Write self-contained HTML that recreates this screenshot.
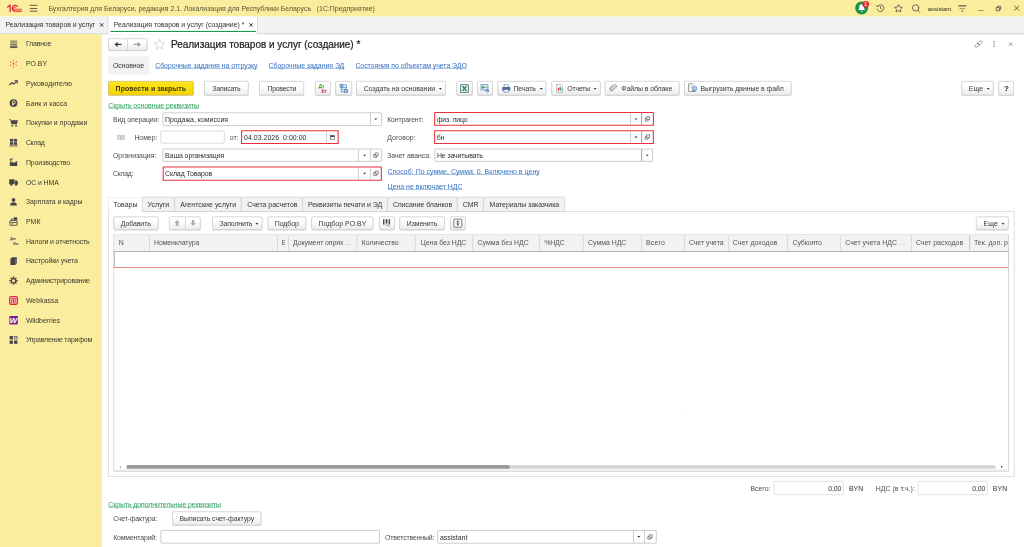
<!DOCTYPE html>
<html lang="ru">
<head>
<meta charset="utf-8">
<title>Реализация товаров и услуг (создание) *</title>
<style>
*{box-sizing:border-box;margin:0;padding:0}
html,body{width:1024px;height:547px;overflow:hidden;background:#fff}
body{font-family:"Liberation Sans",sans-serif;font-size:6.9333px;color:#3a3a3a;position:relative;line-height:8px}
#root{position:absolute;left:0;top:0;width:1920px;height:1026px;overflow:hidden;transform:scale(0.533333);transform-origin:0 0}
.a{position:absolute;white-space:nowrap}
svg.a{overflow:visible}
#txt{position:absolute;left:0;top:0;width:1024px;height:547px;overflow:hidden;will-change:transform}
.t{height:8px;line-height:8px}
.btn{border:1px solid #b4b4b4;border-radius:2.5px;background:linear-gradient(#ffffff 30%,#ececec);box-shadow:0 1px 0 rgba(0,0,0,.16)}
.btn.def{background:linear-gradient(#ffe61f,#f6d200);border-color:#b79a00}
.inp{border:1px solid #a0a0a0;background:#fff;border-radius:2px}
.inp.red{border:2px solid #ea2f38;border-radius:1px}
.lnk{color:#3670c4}
.glnk{color:#27a058}
.tab{border:1px solid #c4c4c4;border-bottom:0;background:#f2f2f2;border-radius:2px 2px 0 0}
</style>
</head>
<body><div id="root">
<div class="a" style="left:0px;top:0px;width:1920px;height:31px;background:#fbed9e"></div>
<div class="a" style="left:0px;top:31px;width:1920px;height:33px;background:#f2f2f2;border-bottom:1px solid #b8b8b8"></div>
<div class="a" style="left:0px;top:64px;width:190px;height:962px;background:#fbed9e"></div>
<div class="a" style="left:190px;top:64px;width:2px;height:962px;background:linear-gradient(90deg,#e4e1d2,#ffffff)"></div>
<svg class="a" style="left:12.38px;top:6.75px;" width="30" height="16.88" viewBox="0 0 32 18"><g fill="none" stroke="#e3262e" stroke-width="2.6" stroke-linecap="round" stroke-linejoin="round"><path d="M2.5 6.5 L7.5 2.5 V15.5"/><path d="M21.5 5.2 A5.6 5.6 0 1 0 17.5 14.6 H30"/><path d="M18.5 8.2 A2.4 2.4 0 1 0 17.6 11 H30" stroke-width="1.6"/></g></svg>
<div class="a" style="left:56px;top:9px;width:14px;height:2px;background:#6b6647"></div>
<div class="a" style="left:56px;top:15px;width:14px;height:2px;background:#6b6647"></div>
<div class="a" style="left:56px;top:20px;width:14px;height:2px;background:#6b6647"></div>
<svg class="a" style="left:1603.12px;top:1.69px;" width="26.25" height="26.25" viewBox="0 0 28 28"><circle cx="13.4" cy="13.8" r="13" fill="#1a9347"/><path d="M13.4 6.2c-2.9 0-4.6 2.2-4.6 5.2 0 3.6-1.3 5.2-2.6 6.6h14.4c-1.3-1.4-2.6-3-2.6-6.6 0-3-1.7-5.2-4.6-5.2z" fill="#fff"/><path d="M11.4 19.4a2 2 0 0 0 4 0z" fill="#fff"/><circle cx="21.6" cy="6.4" r="6.6" fill="#e3212b"/><text x="21.4" y="10" font-family="Liberation Sans, sans-serif" font-size="10" font-weight="bold" fill="#fff" text-anchor="middle">1</text></svg>
<svg class="a" style="left:1641.75px;top:7.12px;" width="16.88" height="16.88" viewBox="0 0 18 18"><g fill="none" stroke="#4d4a3a" stroke-width="1.5" stroke-linecap="round" stroke-linejoin="round"><path d="M3.4 5.2 A7 7 0 1 1 2.6 10.6"/><path d="M1 3.4 L3.2 5.8 L6.2 4.6"/><path d="M9.6 5.4 V9.6 L12.2 11.4"/></g></svg>
<svg class="a" style="left:1675.5px;top:6.75px;" width="17.25" height="17.25" viewBox="0 0 18 18"><path d="M9 1.6 L11.3 6.5 L16.6 7.1 L12.7 10.8 L13.7 16.1 L9 13.5 L4.3 16.1 L5.3 10.8 L1.4 7.1 L6.7 6.5 Z" fill="none" stroke="#4d4a3a" stroke-width="1.5" stroke-linejoin="round"/></svg>
<svg class="a" style="left:1709.25px;top:6.75px;" width="17.62" height="17.62" viewBox="0 0 18 18"><g fill="none" stroke="#4d4a3a" stroke-width="1.5" stroke-linecap="round"><circle cx="8" cy="8" r="6"/><path d="M12.4 12.6 L16 16.4"/></g></svg>
<div class="a" style="left:1797px;top:10px;width:15px;height:2px;background:#4a4736"></div>
<div class="a" style="left:1799px;top:16px;width:10px;height:1px;background:#4a4736"></div>
<div class="a" style="left:1803px;top:20px;width:3px;height:2px;background:#4a4736"></div>
<div class="a" style="left:1834px;top:19px;width:10px;height:1px;background:#4d4a3a"></div>
<svg class="a" style="left:1866.75px;top:10.5px;" width="10.12" height="10.12" viewBox="0 0 10 10"><g fill="none" stroke="#4d4a3a" stroke-width="1.4"><path d="M0.8 3.2 H6.8 V9.2 H0.8 Z"/><path d="M3.2 3 V0.8 H9.2 V6.8 H7"/></g></svg>
<svg class="a" style="left:1901.25px;top:9.75px;" width="10.5" height="10.5" viewBox="0 0 10 10"><path d="M0.8 0.8 L9.2 9.2 M9.2 0.8 L0.8 9.2" stroke="#4d4a3a" stroke-width="1.5" fill="none"/></svg>
<svg class="a" style="left:186.94px;top:42.56px;" width="7.31" height="7.31" viewBox="0 0 8 8"><path d="M0.6 0.6 L7.4 7.4 M7.4 0.6 L0.6 7.4" stroke="#2a2a2a" stroke-width="1.9" fill="none"/></svg>
<div class="a" style="left:202px;top:31px;width:281px;height:33px;background:#fff;border-left:1px solid #c0c0c0;border-right:1px solid #c0c0c0"></div>
<div class="a" style="left:207px;top:58px;width:273px;height:2px;background:#1a9a46"></div>
<svg class="a" style="left:467.25px;top:42.56px;" width="7.31" height="7.31" viewBox="0 0 8 8"><path d="M0.6 0.6 L7.4 7.4 M7.4 0.6 L0.6 7.4" stroke="#2a2a2a" stroke-width="1.9" fill="none"/></svg>
<svg class="a" style="left:16.69px;top:73.69px;" width="16.69" height="16.69" viewBox="0 0 16 16"><g fill="#47454b"><rect x="2" y="2.2" width="12.6" height="1.4"/><rect x="2" y="5.5" width="12.6" height="1.4"/><rect x="2" y="8.6" width="12.6" height="1.4"/><rect x="2" y="11.4" width="12.6" height="4" fill="#8a8468"/><rect x="2" y="11.4" width="12.6" height="1.1"/><rect x="2" y="14.3" width="12.6" height="1.1"/></g></svg>
<svg class="a" style="left:16.69px;top:110.69px;" width="16.69" height="16.69" viewBox="0 0 16 16"><g stroke="#e8343e" stroke-width="0.9" fill="#e8343e" opacity="0.85"><path d="M8 8 L8 2 M8 8 L8 14 M8 8 L2.8 5 M8 8 L13.2 5 M8 8 L2.8 11 M8 8 L13.2 11" opacity="0.5"/><g stroke="none"><circle cx="8" cy="1.8" r="1"/><circle cx="8" cy="14.2" r="1"/><circle cx="2.6" cy="4.9" r="1"/><circle cx="13.4" cy="4.9" r="1"/><circle cx="2.6" cy="11.1" r="1"/><circle cx="13.4" cy="11.1" r="1"/><circle cx="8" cy="8" r="1.1"/></g></g></svg>
<svg class="a" style="left:16.69px;top:147.69px;" width="16.69" height="16.69" viewBox="0 0 16 16"><g fill="none" stroke="#47454b" stroke-width="2" stroke-linejoin="round" stroke-linecap="round"><path d="M1 10.6 L5.4 6.4 L8.4 9.2 L14 3.8"/><path d="M10.4 3.2 H14.6 V7.4"/></g></svg>
<svg class="a" style="left:16.69px;top:184.69px;" width="16.69" height="16.69" viewBox="0 0 16 16"><circle cx="8" cy="8" r="7" fill="#47454b"/><path d="M6.4 12.2 V4.2 H9 A2.4 2.4 0 0 1 9 9 H5.2 M5.2 10.8 H9" fill="none" stroke="#fbed9e" stroke-width="1.4"/></svg>
<svg class="a" style="left:16.69px;top:221.69px;" width="16.69" height="16.69" viewBox="0 0 16 16"><g fill="#47454b"><path d="M0.2 1.4 H3 L3.8 3.4 H16 L14 10.6 H4.4 L2.2 2.8 H0.2 Z"/><circle cx="5.6" cy="13.4" r="1.7"/><circle cx="12.6" cy="13.4" r="1.7"/></g></svg>
<svg class="a" style="left:16.69px;top:258.68px;" width="16.69" height="16.69" viewBox="0 0 16 16"><g fill="#47454b"><rect x="1.6" y="1.4" width="5.8" height="4.8"/><rect x="8.6" y="1.4" width="5.8" height="4.8"/><rect x="1.6" y="7.2" width="5.8" height="4.8"/><rect x="8.6" y="7.2" width="5.8" height="4.8"/><rect x="0.8" y="13.2" width="14.4" height="1.6"/></g></svg>
<svg class="a" style="left:16.69px;top:295.68px;" width="16.69" height="16.69" viewBox="0 0 16 16"><g fill="#47454b"><path d="M1.4 14.8 V6 L5 9 V6 L9 9.4 L13 6 L14.6 6 V14.8 Z"/><rect x="1.4" y="1.4" width="3.4" height="3.6"/><rect x="5.6" y="1" width="2" height="1.6"/></g></svg>
<svg class="a" style="left:16.69px;top:332.68px;" width="16.69" height="16.69" viewBox="0 0 16 16"><g fill="#47454b"><path d="M0.2 3 H10 V11.8 H0.2 Z"/><path d="M10.8 5 H14 L16 8 V11.8 H10.8 Z"/><circle cx="4" cy="12.6" r="2.1"/><circle cx="12.6" cy="12.6" r="2.1"/></g></svg>
<svg class="a" style="left:16.69px;top:369.68px;" width="16.69" height="16.69" viewBox="0 0 16 16"><g fill="#47454b"><circle cx="8" cy="4.6" r="3.3"/><path d="M1.8 14.8 C1.8 10.6 4.6 9 8 9 C11.4 9 14.2 10.6 14.2 14.8 Z"/></g></svg>
<svg class="a" style="left:16.69px;top:406.68px;" width="16.69" height="16.69" viewBox="0 0 16 16"><g fill="none" stroke="#47454b" stroke-width="1.5"><rect x="1.6" y="6.2" width="12.8" height="8.6" rx="0.6"/><path d="M4.4 6 V3.4 H9.2"/><rect x="9.4" y="1.2" width="4.4" height="3.4" fill="#47454b"/><path d="M1.6 9.6 H14.4"/><path d="M4 12.2 H8" stroke-width="1.2"/></g></svg>
<svg class="a" style="left:16.69px;top:443.68px;" width="16.69" height="16.69" viewBox="0 0 16 16"><text x="1.6" y="6.6" font-family="Liberation Sans, sans-serif" font-size="6.4" font-weight="bold" font-style="italic" fill="#47454b">Дт</text><text x="7.4" y="14.2" font-family="Liberation Sans, sans-serif" font-size="6.4" font-weight="bold" font-style="italic" fill="#47454b">Кт</text></svg>
<svg class="a" style="left:16.69px;top:480.68px;" width="16.69" height="16.69" viewBox="0 0 16 16"><g><path d="M2.4 4.2 L5.8 1.2 H14.2 V11.8 L10.8 15 H2.4 Z" fill="#47454b"/><path d="M11 4.4 L14 1.6 V11.6 L11 14.4 Z" fill="#77747a"/></g></svg>
<svg class="a" style="left:16.69px;top:517.68px;" width="16.69" height="16.69" viewBox="0 0 16 16"><g fill="none" stroke="#47454b"><circle cx="8" cy="8" r="3.9" stroke-width="2.4"/><g stroke-width="2.6"><path d="M8 0.6 V3.4 M8 12.6 V15.4 M0.6 8 H3.4 M12.6 8 H15.4 M2.8 2.8 L4.6 4.6 M11.4 11.4 L13.2 13.2 M2.8 13.2 L4.6 11.4 M11.4 4.6 L13.2 2.8"/></g></g></svg>
<svg class="a" style="left:16.69px;top:554.68px;" width="16.69" height="16.69" viewBox="0 0 16 16"><rect x="1.2" y="1.2" width="13.6" height="13.6" rx="2.4" fill="#fbe4e4" stroke="#e3262e" stroke-width="2.4"/><g fill="none" stroke="#e3262e" stroke-width="1.8"><path d="M3.4 4.8 H12.6 M5 6.2 V12.8 M8 6.2 V12.8 M11 6.2 V12.8"/></g></svg>
<svg class="a" style="left:16.69px;top:591.68px;" width="16.69" height="16.69" viewBox="0 0 16 16"><defs><linearGradient id="wbg" x1="0" y1="0" x2="1" y2="0"><stop offset="0" stop-color="#a01b93"/><stop offset="1" stop-color="#5a1d8e"/></linearGradient></defs><rect x="0.4" y="0.4" width="15.2" height="15.2" rx="1" fill="url(#wbg)"/><text x="7.8" y="13.4" font-family="Liberation Sans, sans-serif" font-size="14.5" font-weight="bold" font-style="italic" fill="#fff" text-anchor="middle">W</text></svg>
<svg class="a" style="left:16.69px;top:628.68px;" width="16.69" height="16.69" viewBox="0 0 16 16"><g fill="#47454b"><rect x="1" y="1" width="6" height="6"/><rect x="1" y="9" width="6" height="6"/><rect x="9" y="9" width="6" height="6"/><rect x="9.7" y="1.7" width="4.6" height="4.6" fill="none" stroke="#47454b" stroke-width="1.3"/></g></svg>
<div class="a btn" style="left:203px;top:72px;width:73px;height:23px;"></div>
<div class="a" style="left:239px;top:73px;width:1px;height:20px;background:#c0c0c0"></div>
<svg class="a" style="left:214.12px;top:78px;" width="14.62" height="10.5" viewBox="0 0 16 12"><path d="M0.4 6 L7 0.4 V4.6 H15.6 V7.4 H7 V11.6 Z" fill="#3a3a3a"/></svg>
<svg class="a" style="left:249.75px;top:78px;" width="14.62" height="10.5" viewBox="0 0 16 12"><path d="M15.6 6 L9 0.4 V4.8 H0.4 V7.2 H9 V11.6 Z" fill="#9c9c9c"/></svg>
<svg class="a" style="left:287.62px;top:71.81px;" width="22.5" height="21.38" viewBox="0 0 24 23"><path d="M12 1.6 L15.1 8.4 L22.4 9.2 L17 14.2 L18.5 21.4 L12 17.8 L5.5 21.4 L7 14.2 L1.6 9.2 L8.9 8.4 Z" fill="#fff" stroke="#c4c4c4" stroke-width="1.3" stroke-linejoin="round"/></svg>
<svg class="a" style="left:1826.25px;top:74.62px;" width="17.25" height="15.37" viewBox="0 0 18 16"><g fill="none" stroke="#777" stroke-width="1.15" transform="rotate(-40 9 8)"><rect x="0.6" y="5.4" width="9.6" height="5.2" rx="2.6"/><rect x="7.8" y="5.4" width="9.6" height="5.2" rx="2.6"/></g></svg>
<div class="a" style="left:1863px;top:77px;width:2px;height:3px;background:#666"></div>
<div class="a" style="left:1863px;top:82px;width:2px;height:2px;background:#666"></div>
<div class="a" style="left:1863px;top:86px;width:2px;height:2px;background:#666"></div>
<svg class="a" style="left:1890.56px;top:78.75px;" width="8.06" height="7.88" viewBox="0 0 8 8"><path d="M0.8 0.8 L7.2 7.2 M7.2 0.8 L0.8 7.2" stroke="#6a6a6a" stroke-width="1.3" fill="none"/></svg>
<div class="a" style="left:202px;top:106px;width:78px;height:34px;background:#f2f2f2;border-radius:3px"></div>
<div class="a" style="left:291px;top:128px;width:192px;height:1px;background:#5f8fd6"></div>
<div class="a" style="left:504px;top:128px;width:142px;height:1px;background:#5f8fd6"></div>
<div class="a" style="left:667px;top:128px;width:208px;height:1px;background:#5f8fd6"></div>
<div class="a btn def" style="left:203px;top:152px;width:160px;height:27px;"></div>
<div class="a btn " style="left:383px;top:152px;width:83px;height:27px;"></div>
<div class="a btn " style="left:486px;top:152px;width:84px;height:27px;"></div>
<div class="a btn " style="left:591px;top:152px;width:29px;height:27px;"></div>
<svg class="a" style="left:596.62px;top:157.12px;" width="17.62" height="17.62" viewBox="0 0 18 18"><text x="0" y="8.4" font-family="Liberation Sans, sans-serif" font-size="9.4" font-weight="bold" fill="#1f9d4d">Дт</text><text x="6" y="17" font-family="Liberation Sans, sans-serif" font-size="9.4" font-weight="bold" fill="#e3262e">Кт</text></svg>
<div class="a btn " style="left:629px;top:152px;width:31px;height:27px;"></div>
<svg class="a" style="left:636.38px;top:157.12px;" width="16.88" height="17.62" viewBox="0 0 18 19"><g fill="none" stroke="#3f73b5" stroke-width="1.4"><rect x="1.6" y="1.4" width="6" height="5.6" fill="#9fc0e6"/><rect x="10.6" y="11.6" width="6" height="5.6" fill="#9fc0e6"/><path d="M9 2.4 H14.6 V9.4 M9.4 16.4 H4 V9.4"/><rect x="5" y="7.6" width="8.4" height="4" fill="#dbe7f5" stroke-width="1"/></g></svg>
<div class="a btn " style="left:668px;top:152px;width:168px;height:27px;"></div>
<svg class="a" style="left:823.31px;top:164.91px;" width="5.62" height="3.19" viewBox="0 0 6 3.4"><path d="M0 0 H6 L3 3.4 Z" fill="#3a3a3a"/></svg>
<div class="a btn " style="left:856px;top:152px;width:30px;height:27px;"></div>
<svg class="a" style="left:862.88px;top:157.88px;" width="15.75" height="16.12" viewBox="0 0 17 17"><rect x="0.8" y="0.8" width="15.4" height="15.4" fill="#e9f1ea" stroke="#2b5a86" stroke-width="1.5"/><path d="M4.6 3.8 L12.4 13.2 M12.4 3.8 L4.6 13.2" stroke="#1f7a3e" stroke-width="2.4" fill="none"/><path d="M1 15.6 H16" stroke="#8fc04a" stroke-width="1"/></svg>
<div class="a btn " style="left:895px;top:152px;width:29px;height:27px;"></div>
<svg class="a" style="left:900.75px;top:158.25px;" width="17.62" height="15.75" viewBox="0 0 19 17"><rect x="1" y="1" width="14" height="10.4" fill="#e3ecf7" stroke="#4a7dbb" stroke-width="1.4"/><circle cx="5" cy="6.2" r="2.4" fill="#2a9a4a"/><path d="M8 6.2 H13" stroke="#2a9a4a" stroke-width="1.4"/><path d="M9 13.4 H16.4 M13.6 10.4 L16.8 13.4 L13.6 16.4" fill="none" stroke="#2d66b8" stroke-width="1.8"/></svg>
<div class="a btn " style="left:933px;top:152px;width:91px;height:27px;"></div>
<svg class="a" style="left:940.5px;top:157.5px;" width="16.5" height="16.12" viewBox="0 0 18 17"><rect x="4.4" y="1" width="9.2" height="5" fill="#fff" stroke="#56739c" stroke-width="1.2"/><rect x="0.8" y="5.4" width="16.4" height="7.6" rx="1.4" fill="#4b6a96"/><rect x="4.4" y="10.4" width="9.2" height="5.4" fill="#fff" stroke="#56739c" stroke-width="1.2"/></svg>
<svg class="a" style="left:1012.13px;top:164.91px;" width="5.62" height="3.19" viewBox="0 0 6 3.4"><path d="M0 0 H6 L3 3.4 Z" fill="#3a3a3a"/></svg>
<div class="a btn " style="left:1034px;top:152px;width:92px;height:27px;"></div>
<svg class="a" style="left:1042.5px;top:156.75px;" width="12.75" height="17.25" viewBox="0 0 14 18"><path d="M1 1 H9.4 L13 4.6 V17 H1 Z" fill="#fff" stroke="#8a8a8a" stroke-width="1.2"/><rect x="3.4" y="8" width="2.6" height="5.6" fill="#e3262e"/><rect x="6.8" y="5.6" width="2.6" height="8" fill="#2a9a4a"/><path d="M10 9 H11.6 V13.6 H10 Z" fill="#d9a400"/></svg>
<svg class="a" style="left:1113.19px;top:164.91px;" width="5.62" height="3.19" viewBox="0 0 6 3.4"><path d="M0 0 H6 L3 3.4 Z" fill="#3a3a3a"/></svg>
<div class="a btn " style="left:1134px;top:152px;width:140px;height:27px;"></div>
<svg class="a" style="left:1143px;top:158.25px;" width="13.5" height="14.62" viewBox="0 0 14 15"><path d="M11.6 3.4 L5 10 A1.7 1.7 0 0 1 2.6 7.6 L8.8 1.6 A2.8 2.8 0 0 1 12.8 5.6 L6.2 12.2 A4 4 0 0 1 0.8 6.6 L5.6 1.8" fill="none" stroke="#5c5c5c" stroke-width="1.2" stroke-linecap="round"/></svg>
<div class="a btn " style="left:1283px;top:152px;width:201px;height:27px;"></div>
<svg class="a" style="left:1290.38px;top:156.38px;" width="16.5" height="18.38" viewBox="0 0 18 20"><path d="M1 1 H9 L12.6 4.6 V17 H1 Z" fill="#fff" stroke="#666" stroke-width="1.3"/><path d="M3.2 5 H8 M3.2 8 H6" stroke="#888" stroke-width="1"/><rect x="8.4" y="7.6" width="8.6" height="7.4" fill="#dce8f6" stroke="#3f73b5" stroke-width="1.2"/><path d="M10 10 H15.4 M10 12.6 H15.4" stroke="#3f73b5" stroke-width="1"/><path d="M9.6 16.4 A3.8 2.6 0 0 0 16.4 16.4 Z" fill="#3f73b5"/></svg>
<div class="a btn " style="left:1803px;top:152px;width:60px;height:27px;"></div>
<svg class="a" style="left:1850.06px;top:164.91px;" width="5.62" height="3.19" viewBox="0 0 6 3.4"><path d="M0 0 H6 L3 3.4 Z" fill="#3a3a3a"/></svg>
<div class="a btn " style="left:1872px;top:152px;width:29px;height:27px;"></div>
<div class="a" style="left:203px;top:203px;width:170px;height:1px;background:#56b57e"></div>
<div class="a inp" style="left:305px;top:211px;width:411px;height:25px;"></div>
<div class="a" style="left:694px;top:212px;width:1px;height:22px;background:#a8a8a8"></div>
<svg class="a" style="left:702.47px;top:222.09px;" width="5.44" height="3.19" viewBox="0 0 6 3.4"><path d="M0 0 H6 L3 3.4 Z" fill="#2e2e2e"/></svg>
<div class="a inp red" style="left:814px;top:210px;width:412px;height:26px;"></div>
<div class="a" style="left:1182px;top:212px;width:1px;height:23px;background:#a8a8a8"></div>
<div class="a" style="left:1202px;top:212px;width:2px;height:23px;background:#a8a8a8"></div>
<svg class="a" style="left:1189.78px;top:222.09px;" width="5.44" height="3.19" viewBox="0 0 6 3.4"><path d="M0 0 H6 L3 3.4 Z" fill="#2e2e2e"/></svg>
<svg class="a" style="left:1209px;top:218.44px;" width="9.75" height="9.75" viewBox="0 0 10 10"><g fill="none" stroke="#4a4a4a" stroke-width="1.25"><path d="M3.6 0.8 H9.2 V6.2 H3.6 Z"/><path d="M3.6 3.6 H0.8 V9.2 H6.4 V6.4"/></g></svg>
<svg class="a" style="left:219.75px;top:252.75px;" width="14.25" height="9.38" viewBox="0 0 15 10"><rect x="0.6" y="0.6" width="13.8" height="8.8" fill="#efefef" stroke="#b0b0b0" stroke-width="1.1"/><rect x="4.6" y="2.2" width="6" height="5.6" fill="#c4c4c4"/><path d="M2.6 2.4 V7.6 M12.6 2.4 V7.6" stroke="#c4c4c4" stroke-width="0.9"/></svg>
<div class="a inp" style="left:301px;top:245px;width:120px;height:24px;border-color:#bdbdbd;"></div>
<div class="a inp red" style="left:452px;top:244px;width:183px;height:26px;"></div>
<div class="a" style="left:612px;top:246px;width:1px;height:23px;background:#a8a8a8"></div>
<svg class="a" style="left:618.56px;top:253.12px;" width="8.62" height="8.62" viewBox="0 0 11 11"><rect x="0.8" y="1.6" width="9.4" height="8.6" fill="#fff" stroke="#444" stroke-width="1.4"/><rect x="0.8" y="1.6" width="9.4" height="3.4" fill="#444"/></svg>
<div class="a inp red" style="left:814px;top:244px;width:412px;height:26px;"></div>
<div class="a" style="left:1182px;top:246px;width:1px;height:23px;background:#a8a8a8"></div>
<div class="a" style="left:1202px;top:246px;width:2px;height:23px;background:#a8a8a8"></div>
<svg class="a" style="left:1189.78px;top:256.03px;" width="5.44" height="3.19" viewBox="0 0 6 3.4"><path d="M0 0 H6 L3 3.4 Z" fill="#2e2e2e"/></svg>
<svg class="a" style="left:1209px;top:252.38px;" width="9.75" height="9.75" viewBox="0 0 10 10"><g fill="none" stroke="#4a4a4a" stroke-width="1.25"><path d="M3.6 0.8 H9.2 V6.2 H3.6 Z"/><path d="M3.6 3.6 H0.8 V9.2 H6.4 V6.4"/></g></svg>
<div class="a inp" style="left:305px;top:279px;width:411px;height:24px;"></div>
<div class="a" style="left:672px;top:280px;width:1px;height:22px;background:#a8a8a8"></div>
<div class="a" style="left:694px;top:280px;width:1px;height:22px;background:#a8a8a8"></div>
<svg class="a" style="left:680.91px;top:289.78px;" width="5.44" height="3.19" viewBox="0 0 6 3.4"><path d="M0 0 H6 L3 3.4 Z" fill="#2e2e2e"/></svg>
<svg class="a" style="left:700.12px;top:286.13px;" width="9.75" height="9.75" viewBox="0 0 10 10"><g fill="none" stroke="#4a4a4a" stroke-width="1.25"><path d="M3.6 0.8 H9.2 V6.2 H3.6 Z"/><path d="M3.6 3.6 H0.8 V9.2 H6.4 V6.4"/></g></svg>
<div class="a inp" style="left:815px;top:279px;width:409px;height:24px;"></div>
<div class="a" style="left:1202px;top:280px;width:2px;height:22px;background:#a8a8a8"></div>
<svg class="a" style="left:1210.78px;top:289.78px;" width="5.44" height="3.19" viewBox="0 0 6 3.4"><path d="M0 0 H6 L3 3.4 Z" fill="#2e2e2e"/></svg>
<div class="a inp red" style="left:305px;top:312px;width:411px;height:27px;"></div>
<div class="a" style="left:672px;top:314px;width:1px;height:23px;background:#a8a8a8"></div>
<div class="a" style="left:694px;top:314px;width:1px;height:23px;background:#a8a8a8"></div>
<svg class="a" style="left:680.91px;top:324.09px;" width="5.44" height="3.19" viewBox="0 0 6 3.4"><path d="M0 0 H6 L3 3.4 Z" fill="#2e2e2e"/></svg>
<svg class="a" style="left:700.12px;top:320.44px;" width="9.75" height="9.75" viewBox="0 0 10 10"><g fill="none" stroke="#4a4a4a" stroke-width="1.25"><path d="M3.6 0.8 H9.2 V6.2 H3.6 Z"/><path d="M3.6 3.6 H0.8 V9.2 H6.4 V6.4"/></g></svg>
<div class="a" style="left:727px;top:327px;width:285px;height:1px;background:#5f8fd6"></div>
<div class="a" style="left:727px;top:355px;width:140px;height:1px;background:#5f8fd6"></div>
<div class="a" style="left:203px;top:396px;width:1699px;height:498px;border:1px solid #c4c4c4;background:#fff"></div>
<div class="a tab" style="left:203px;top:369px;width:64px;height:29px;background:#fff;"></div>
<div class="a tab" style="left:266px;top:369px;width:62px;height:28px;border-bottom:1px solid #c4c4c4;"></div>
<div class="a tab" style="left:327px;top:369px;width:126px;height:28px;border-bottom:1px solid #c4c4c4;"></div>
<div class="a tab" style="left:452px;top:369px;width:116px;height:28px;border-bottom:1px solid #c4c4c4;"></div>
<div class="a tab" style="left:567px;top:369px;width:160px;height:28px;border-bottom:1px solid #c4c4c4;"></div>
<div class="a tab" style="left:726px;top:369px;width:132px;height:28px;border-bottom:1px solid #c4c4c4;"></div>
<div class="a tab" style="left:857px;top:369px;width:50px;height:28px;border-bottom:1px solid #c4c4c4;"></div>
<div class="a tab" style="left:906px;top:369px;width:153px;height:28px;border-bottom:1px solid #c4c4c4;"></div>
<div class="a btn " style="left:213px;top:406px;width:84px;height:25px;"></div>
<div class="a btn " style="left:317px;top:406px;width:59px;height:25px;"></div>
<div class="a" style="left:347px;top:407px;width:1px;height:22px;background:#c0c0c0"></div>
<svg class="a" style="left:326.25px;top:411.75px;" width="12" height="12.38" viewBox="0 0 12 13"><path d="M6 0.6 L11.6 6.4 H8.4 V12.4 H3.6 V6.4 H0.4 Z" fill="#b0b0b0"/></svg>
<svg class="a" style="left:355.5px;top:412.12px;" width="12" height="12.38" viewBox="0 0 12 13"><path d="M6 12.4 L11.6 6.6 H8.4 V0.6 H3.6 V6.6 H0.4 Z" fill="#b0b0b0"/></svg>
<div class="a btn " style="left:398px;top:406px;width:94px;height:25px;"></div>
<svg class="a" style="left:479.44px;top:417.66px;" width="5.62" height="3.19" viewBox="0 0 6 3.4"><path d="M0 0 H6 L3 3.4 Z" fill="#3a3a3a"/></svg>
<div class="a btn " style="left:502px;top:406px;width:72px;height:25px;"></div>
<div class="a btn " style="left:584px;top:406px;width:116px;height:25px;"></div>
<div class="a btn " style="left:711px;top:406px;width:29px;height:25px;"></div>
<svg class="a" style="left:717px;top:409.88px;" width="16.12" height="16.5" viewBox="0 0 17 18"><g fill="#4a4a4a"><rect x="1" y="1" width="2.2" height="11"/><rect x="4.4" y="1" width="1.2" height="11"/><rect x="6.8" y="1" width="2.6" height="8"/><rect x="10.6" y="1" width="1.2" height="8"/><rect x="13" y="1" width="2.4" height="11"/></g><circle cx="9.6" cy="11.6" r="2.8" fill="#fff" stroke="#3f73b5" stroke-width="1.2"/><path d="M11.8 13.8 L15 17" stroke="#c98a1a" stroke-width="1.8"/></svg>
<div class="a btn " style="left:749px;top:406px;width:85px;height:25px;"></div>
<div class="a btn " style="left:844px;top:406px;width:29px;height:25px;"></div>
<svg class="a" style="left:850.12px;top:409.88px;" width="16.88" height="16.88" viewBox="0 0 18 18"><rect x="1" y="1" width="16" height="16" rx="1.6" fill="#fff" stroke="#444" stroke-width="1.4"/><path d="M9 3.4 L11.4 6.6 H6.6 Z M9 14.6 L11.4 11.4 H6.6 Z" fill="#444"/><path d="M9 6 V12" stroke="#444" stroke-width="1.2"/><path d="M5 9 H13" stroke="#444" stroke-width="1"/></svg>
<div class="a btn " style="left:1830px;top:406px;width:61px;height:25px;"></div>
<svg class="a" style="left:1877.81px;top:417.66px;" width="5.62" height="3.19" viewBox="0 0 6 3.4"><path d="M0 0 H6 L3 3.4 Z" fill="#3a3a3a"/></svg>
<div class="a" style="left:213px;top:440px;width:1678px;height:444px;border:1px solid #b4b4b4;background:#fff"></div>
<div class="a" style="left:214px;top:441px;width:1676px;height:29px;background:#f2f2f2"></div>
<div class="a" style="left:213px;top:471px;width:1678px;height:1px;background:#707070"></div>
<div class="a" style="left:280px;top:441px;width:1px;height:29px;background:#c6c6c6"></div>
<div class="a" style="left:520px;top:441px;width:1px;height:29px;background:#c6c6c6"></div>
<div class="a" style="left:540px;top:441px;width:1px;height:29px;background:#c6c6c6"></div>
<div class="a" style="left:669px;top:441px;width:1px;height:29px;background:#c6c6c6"></div>
<div class="a" style="left:778px;top:441px;width:1px;height:29px;background:#c6c6c6"></div>
<div class="a" style="left:886px;top:441px;width:1px;height:29px;background:#c6c6c6"></div>
<div class="a" style="left:1011px;top:441px;width:1px;height:29px;background:#c6c6c6"></div>
<div class="a" style="left:1093px;top:441px;width:1px;height:29px;background:#c6c6c6"></div>
<div class="a" style="left:1202px;top:441px;width:1px;height:29px;background:#c6c6c6"></div>
<div class="a" style="left:1283px;top:441px;width:1px;height:29px;background:#c6c6c6"></div>
<div class="a" style="left:1365px;top:441px;width:1px;height:29px;background:#c6c6c6"></div>
<div class="a" style="left:1476px;top:441px;width:1px;height:29px;background:#c6c6c6"></div>
<div class="a" style="left:1575px;top:441px;width:1px;height:29px;background:#c6c6c6"></div>
<div class="a" style="left:1709px;top:441px;width:1px;height:29px;background:#c6c6c6"></div>
<div class="a" style="left:1817px;top:441px;width:2px;height:29px;background:#c6c6c6"></div>
<div class="a" style="left:214px;top:472px;width:1677px;height:30px;border:1px solid #8c8c8c;border-top:0;border-right-color:#c4c4c4;border-bottom:1px solid #cf2029;"></div>
<div class="a" style="left:237px;top:872px;width:1630px;height:7px;background:#d6d6d6;border-radius:4px"></div>
<div class="a" style="left:237px;top:872px;width:719px;height:7px;background:#9b9b9b;border-radius:4px"></div>
<div class="a" style="left:215px;top:880px;width:1674px;height:3px;background:#ececec"></div>
<svg class="a" style="left:224.44px;top:873.56px;" width="2.81" height="3.94" viewBox="0 0 4 6"><path d="M4 0 L0 3 L4 6 Z" fill="#8a8a8a"/></svg>
<svg class="a" style="left:1876.88px;top:873.38px;" width="3.38" height="4.5" viewBox="0 0 4 6"><path d="M0 0 L4 3 L0 6 Z" fill="#333"/></svg>
<div class="a inp" style="left:1451px;top:902px;width:131px;height:26px;border-color:#c9c9c9;"></div>
<div class="a inp" style="left:1721px;top:902px;width:131px;height:26px;border-color:#c9c9c9;"></div>
<div class="a" style="left:203px;top:951px;width:211px;height:1px;background:#56b57e"></div>
<div class="a btn " style="left:323px;top:959px;width:167px;height:26px;"></div>
<div class="a inp" style="left:301px;top:994px;width:411px;height:25px;"></div>
<div class="a inp" style="left:820px;top:994px;width:411px;height:25px;"></div>
<div class="a" style="left:1187px;top:995px;width:1px;height:23px;background:#a8a8a8"></div>
<div class="a" style="left:1208px;top:995px;width:1px;height:23px;background:#a8a8a8"></div>
<svg class="a" style="left:1195.03px;top:1005.47px;" width="5.44" height="3.19" viewBox="0 0 6 3.4"><path d="M0 0 H6 L3 3.4 Z" fill="#2e2e2e"/></svg>
<svg class="a" style="left:1214.44px;top:1001.81px;" width="9.75" height="9.75" viewBox="0 0 10 10"><g fill="none" stroke="#4a4a4a" stroke-width="1.25"><path d="M3.6 0.8 H9.2 V6.2 H3.6 Z"/><path d="M3.6 3.6 H0.8 V9.2 H6.4 V6.4"/></g></svg>
<div class="a" style="left:1281px;top:769.12px;width:1.12px;height:1.12px;background:#bdbdbd"></div>
</div>
<div id="txt">
<div class="a t" style="left:48.4px;top:5px;color:#5a5535;">Бухгалтерия для Беларуси, редакция 2.1. Локализация для Республики Беларусь &nbsp; (1С:Предприятие)</div>
<div class="a t" style="left:927.8px;top:5px;font-size:5.9px;letter-spacing:0.027px;color:#2e2c20;">assistant</div>
<div class="a t" style="left:5.5px;top:21px;letter-spacing:-0.048px;color:#333;">Реализация товаров и услуг</div>
<div class="a t" style="left:113.8px;top:21px;letter-spacing:-0.031px;color:#333;">Реализация товаров и услуг (создание) *</div>
<div class="a t" style="left:25.9px;top:40px;letter-spacing:-0.170px;color:#3d3b32;">Главное</div>
<div class="a t" style="left:25.9px;top:60px;color:#3d3b32;">PO.BY</div>
<div class="a t" style="left:25.9px;top:80px;letter-spacing:-0.013px;color:#3d3b32;">Руководителю</div>
<div class="a t" style="left:25.9px;top:100px;letter-spacing:0.048px;color:#3d3b32;">Банк и касса</div>
<div class="a t" style="left:25.9px;top:119px;color:#3d3b32;">Покупки и продажи</div>
<div class="a t" style="left:25.9px;top:139px;letter-spacing:-0.273px;color:#3d3b32;">Склад</div>
<div class="a t" style="left:25.9px;top:159px;letter-spacing:-0.076px;color:#3d3b32;">Производство</div>
<div class="a t" style="left:25.9px;top:179px;letter-spacing:-0.079px;color:#3d3b32;">ОС и НМА</div>
<div class="a t" style="left:25.9px;top:198px;letter-spacing:-0.082px;color:#3d3b32;">Зарплата и кадры</div>
<div class="a t" style="left:25.9px;top:218px;letter-spacing:0.111px;color:#3d3b32;">РМК</div>
<div class="a t" style="left:25.9px;top:238px;letter-spacing:-0.132px;color:#3d3b32;">Налоги и отчетность</div>
<div class="a t" style="left:25.9px;top:257px;letter-spacing:-0.106px;color:#3d3b32;">Настройки учета</div>
<div class="a t" style="left:25.9px;top:277px;letter-spacing:-0.125px;color:#3d3b32;">Администрирование</div>
<div class="a t" style="left:25.9px;top:297px;letter-spacing:0.044px;color:#3d3b32;">Webkassa</div>
<div class="a t" style="left:25.9px;top:317px;letter-spacing:-0.061px;color:#3d3b32;">Wildberries</div>
<div class="a t" style="left:25.9px;top:336px;letter-spacing:-0.177px;color:#3d3b32;">Управление тарифом</div>
<div class="a t" style="left:171px;top:39px;font-size:10px;letter-spacing:-0.025px;color:#1e1e1e;height:12px;line-height:12px;-webkit-text-stroke:0.22px #1e1e1e;">Реализация товаров и услуг (создание) *</div>
<div class="a t" style="left:113px;top:62px;letter-spacing:-0.072px;color:#333;">Основное</div>
<div class="a t lnk" style="left:155.2px;top:62px;letter-spacing:-0.019px;">Сборочные задания на отгрузку</div>
<div class="a t lnk" style="left:268.6px;top:62px;letter-spacing:-0.029px;">Сборочные задания ЭД</div>
<div class="a t lnk" style="left:355.4px;top:62px;letter-spacing:-0.043px;">Состояния по объектам учета ЭДО</div>
<div class="a t" style="left:115.6px;top:85px;letter-spacing:0.060px;color:#40380a;font-weight:bold;">Провести и закрыть</div>
<div class="a t" style="left:212.3px;top:85px;letter-spacing:-0.167px;color:#3a3a3a;">Записать</div>
<div class="a t" style="left:267.4px;top:85px;letter-spacing:-0.234px;color:#3a3a3a;">Провести</div>
<div class="a t" style="left:363.8px;top:85px;letter-spacing:-0.027px;color:#3a3a3a;">Создать на основании</div>
<div class="a t" style="left:513.4px;top:85px;letter-spacing:-0.019px;color:#3a3a3a;">Печать</div>
<div class="a t" style="left:567.3px;top:85px;letter-spacing:-0.178px;color:#3a3a3a;">Отчеты</div>
<div class="a t" style="left:621.2px;top:85px;letter-spacing:-0.061px;color:#3a3a3a;">Файлы в облаке</div>
<div class="a t" style="left:700.5px;top:85px;letter-spacing:-0.046px;color:#3a3a3a;">Выгрузить данные в файл</div>
<div class="a t" style="left:968.8px;top:85px;letter-spacing:0.097px;color:#3a3a3a;">Еще</div>
<div class="a t" style="left:1003.9px;top:85px;font-size:8px;color:#222;font-weight:bold;">?</div>
<div class="a t glnk" style="left:108.3px;top:102px;letter-spacing:-0.068px;">Скрыть основные реквизиты</div>
<div class="a t" style="left:113px;top:116px;letter-spacing:-0.069px;color:#4d4d4d;">Вид операции:</div>
<div class="a t" style="left:165px;top:116px;letter-spacing:0.014px;color:#2e2e2e;">Продажа, комиссия</div>
<div class="a t" style="left:387.2px;top:116px;letter-spacing:-0.143px;color:#4d4d4d;">Контрагент:</div>
<div class="a t" style="left:436.7px;top:116px;letter-spacing:-0.176px;color:#2e2e2e;">физ. лицо</div>
<div class="a t" style="left:134.4px;top:134px;letter-spacing:-0.046px;color:#4d4d4d;">Номер:</div>
<div class="a t" style="left:229.8px;top:134px;letter-spacing:-0.069px;color:#4d4d4d;">от:</div>
<div class="a t" style="left:244px;top:134px;letter-spacing:0.048px;color:#2e2e2e;">04.03.2026 &nbsp;0:00:00</div>
<div class="a t" style="left:387.2px;top:134px;letter-spacing:0.061px;color:#4d4d4d;">Договор:</div>
<div class="a t" style="left:436.7px;top:134px;letter-spacing:-0.050px;color:#2e2e2e;">бн</div>
<div class="a t" style="left:113px;top:152px;letter-spacing:-0.029px;color:#4d4d4d;">Организация:</div>
<div class="a t" style="left:165px;top:152px;letter-spacing:-0.044px;color:#2e2e2e;">Ваша организация</div>
<div class="a t" style="left:387.2px;top:152px;letter-spacing:-0.064px;color:#4d4d4d;">Зачет аванса:</div>
<div class="a t" style="left:437px;top:152px;letter-spacing:-0.124px;color:#2e2e2e;">Не зачитывать</div>
<div class="a t" style="left:113px;top:170px;letter-spacing:-0.299px;color:#4d4d4d;">Склад:</div>
<div class="a t" style="left:165px;top:170px;letter-spacing:-0.092px;color:#2e2e2e;">Склад Товаров</div>
<div class="a t lnk" style="left:387.5px;top:168px;letter-spacing:0.044px;">Способ: По сумме, Сумма: 0, Включено в цену</div>
<div class="a t lnk" style="left:387.5px;top:183px;letter-spacing:0.005px;">Цена не включает НДС</div>
<div class="a t" style="left:113.6px;top:201px;letter-spacing:-0.010px;color:#333;">Товары</div>
<div class="a t" style="left:147.6px;top:201px;letter-spacing:0.046px;color:#333;">Услуги</div>
<div class="a t" style="left:180.2px;top:201px;letter-spacing:0.081px;color:#333;">Агентские услуги</div>
<div class="a t" style="left:247.2px;top:201px;letter-spacing:0.027px;color:#333;">Счета расчетов</div>
<div class="a t" style="left:308px;top:201px;letter-spacing:-0.030px;color:#333;">Реквизиты печати и ЭД</div>
<div class="a t" style="left:393px;top:201px;letter-spacing:-0.018px;color:#333;">Списание бланков</div>
<div class="a t" style="left:462.8px;top:201px;letter-spacing:-0.064px;color:#333;">CMR</div>
<div class="a t" style="left:489.6px;top:201px;letter-spacing:-0.049px;color:#333;">Материалы заказчика</div>
<div class="a t" style="left:120.8px;top:220px;letter-spacing:-0.080px;color:#3a3a3a;">Добавить</div>
<div class="a t" style="left:219.4px;top:220px;letter-spacing:-0.116px;color:#3a3a3a;">Заполнить</div>
<div class="a t" style="left:274.8px;top:220px;letter-spacing:-0.069px;color:#3a3a3a;">Подбор</div>
<div class="a t" style="left:318.6px;top:220px;letter-spacing:0.022px;color:#3a3a3a;">Подбор PO.BY</div>
<div class="a t" style="left:406.8px;top:220px;letter-spacing:-0.109px;color:#3a3a3a;">Изменить</div>
<div class="a t" style="left:983.6px;top:220px;letter-spacing:0.097px;color:#3a3a3a;">Еще</div>
<div class="a t" style="left:118.8px;top:239px;color:#555;">N</div>
<div class="a t" style="left:154px;top:239px;letter-spacing:-0.094px;color:#555;">Номенклатура</div>
<div class="a t" style="left:281.8px;top:239px;color:#555;width:3.1px;overflow:hidden;">Ед.</div>
<div class="a t" style="left:293.1px;top:239px;letter-spacing:-0.071px;color:#555;">Документ оприх</div>
<div class="a t" style="left:361.8px;top:239px;letter-spacing:-0.043px;color:#555;">Количество</div>
<div class="a t" style="left:420.8px;top:239px;letter-spacing:-0.034px;color:#555;">Цена без НДС</div>
<div class="a t" style="left:477.6px;top:239px;letter-spacing:0.006px;color:#555;">Сумма без НДС</div>
<div class="a t" style="left:544.2px;top:239px;letter-spacing:-0.169px;color:#555;">%НДС</div>
<div class="a t" style="left:588px;top:239px;color:#555;">Сумма НДС</div>
<div class="a t" style="left:646px;top:239px;letter-spacing:0.203px;color:#555;">Всего</div>
<div class="a t" style="left:688.9px;top:239px;letter-spacing:-0.023px;color:#555;">Счет учета</div>
<div class="a t" style="left:732.8px;top:239px;letter-spacing:0.069px;color:#555;">Счет доходов</div>
<div class="a t" style="left:792.6px;top:239px;letter-spacing:-0.134px;color:#555;">Субконто</div>
<div class="a t" style="left:845.2px;top:239px;letter-spacing:0.031px;color:#555;">Счет учета НДС</div>
<div class="a t" style="left:915.9px;top:239px;letter-spacing:0.013px;color:#555;">Счет расходов</div>
<div class="a t" style="left:344.4px;top:239px;letter-spacing:0.272px;color:#aaa;">...</div>
<div class="a t" style="left:899.4px;top:239px;letter-spacing:0.139px;color:#aaa;">...</div>
<div class="a t" style="left:974px;top:239px;color:#555;width:33.8px;overflow:hidden;">Тек. доп. расходы</div>
<div class="a t" style="left:750.4px;top:485px;letter-spacing:0.015px;color:#4d4d4d;">Всего:</div>
<div class="a t" style="left:828.2px;top:485px;letter-spacing:-0.125px;color:#333;">0,00</div>
<div class="a t" style="left:849px;top:485px;letter-spacing:-0.019px;color:#333;">BYN</div>
<div class="a t" style="left:875.7px;top:485px;letter-spacing:0.049px;color:#4d4d4d;">НДС (в т.ч.):</div>
<div class="a t" style="left:972.2px;top:485px;letter-spacing:-0.125px;color:#333;">0,00</div>
<div class="a t" style="left:992.8px;top:485px;letter-spacing:0.081px;color:#333;">BYN</div>
<div class="a t glnk" style="left:108.3px;top:501px;letter-spacing:-0.080px;">Скрыть дополнительные реквизиты</div>
<div class="a t" style="left:113.2px;top:515px;letter-spacing:-0.201px;color:#4d4d4d;">Счет-фактура:</div>
<div class="a t" style="left:179.4px;top:515px;letter-spacing:-0.038px;color:#3a3a3a;">Выписать счет-фактуру</div>
<div class="a t" style="left:113.2px;top:534px;letter-spacing:-0.158px;color:#4d4d4d;">Комментарий:</div>
<div class="a t" style="left:385px;top:534px;letter-spacing:-0.146px;color:#4d4d4d;">Ответственный:</div>
<div class="a t" style="left:440px;top:534px;color:#2e2e2e;">assistant</div>
</div>
</body>
</html>
